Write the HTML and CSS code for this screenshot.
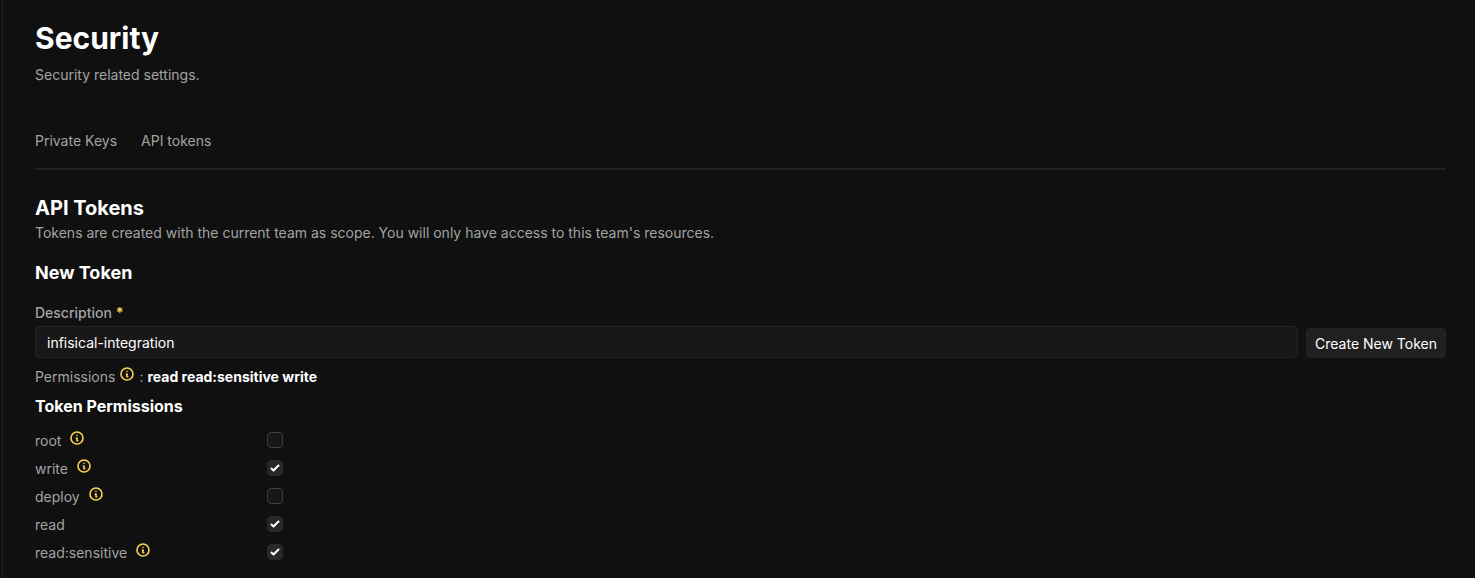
FILE: index.html
```
<!DOCTYPE html>
<html lang="en">
<head>
<meta charset="utf-8">
<title>Security</title>
<link rel="stylesheet" href="styles.css">
</head>
<body>
<svg class="sprite" aria-hidden="true">
  <symbol id="info" viewBox="0 0 24 24">
    <g fill="none" stroke="currentColor" stroke-width="2.4" stroke-linecap="round" stroke-linejoin="round">
      <circle cx="12" cy="12" r="9"/>
      <path d="M12 8h.01M11 12h1v4h1"/>
    </g>
  </symbol>
</svg>
<main class="page">
  <h1 class="title">Security</h1>
  <p class="subtitle">Security related settings.</p>
  <nav class="tabs">
    <a class="tab" href="#keys">Private Keys</a>
    <a class="tab" href="#tokens">API tokens</a>
  </nav>
  <section>
    <h2 class="heading">API Tokens</h2>
    <p class="lead">Tokens are created with the current team as scope. You will only have access to this team's resources.</p>
    <h3 class="subheading">New Token</h3>
    <form>
      <div class="create">
        <div class="field">
          <label class="label" for="description">Description <span class="required">*</span></label>
          <input class="input" id="description" type="text" value="infisical-integration" required>
        </div>
        <button class="button" type="submit">Create New Token</button>
      </div>
      <p class="summary">Permissions <svg class="icon"><use href="#info"/></svg> <span>:</span> <strong class="granted">read read:sensitive write</strong></p>
      <h4 class="minor">Token Permissions</h4>
      <div class="permissions">
        <div class="permission"><label class="name" for="root">root <svg class="icon"><use href="#info"/></svg></label><input class="check" id="root" type="checkbox"></div>
        <div class="permission"><label class="name" for="write">write <svg class="icon"><use href="#info"/></svg></label><input class="check" id="write" type="checkbox" checked></div>
        <div class="permission"><label class="name" for="deploy">deploy <svg class="icon"><use href="#info"/></svg></label><input class="check" id="deploy" type="checkbox"></div>
        <div class="permission"><label class="name" for="read">read</label><input class="check" id="read" type="checkbox" checked></div>
        <div class="permission"><label class="name" for="sensitive">read:sensitive <svg class="icon"><use href="#info"/></svg></label><input class="check" id="sensitive" type="checkbox" checked></div>
      </div>
    </form>
  </section>
</main>
</body>
</html>
```
FILE: styles.css
```
* { box-sizing: border-box; }
html { background: #101010; }
body {
  margin: 0 0 0 2px;
  background: #101010;
  color: #a3a3a3;
  font: 14px/20px Inter, "Liberation Sans", sans-serif;
}
h1, h2, h3, h4, p { margin: 0; }
h1, h2, h3, h4 { color: #fff; font-weight: 700; }
.sprite { display: none; }
.page {
  min-height: 100vh;
  padding: 20px 29px 0 32px;
  border-left: 1px solid #202020;
}
.title { font-size: 30px; line-height: 36px; }
.subtitle { padding-top: 9px; }
.tabs {
  display: flex;
  gap: 24px;
  margin-top: 46px;
  padding-bottom: 17px;
  border-bottom: 2px solid #202020;
}
.tab { color: inherit; text-decoration: none; }
.heading { margin-top: 24px; font-size: 20px; line-height: 28px; }
.lead { padding-top: 1px; }
.subheading { margin-top: 16px; font-size: 18px; line-height: 28px; }
.create {
  display: flex;
  align-items: flex-end;
  gap: 8px;
  margin-top: 16px;
}
.field { display: flex; flex: 1; flex-direction: column; gap: 3px; }
.label { font-weight: 500; }
.required { color: #fcd452; font-weight: 700; }
.input {
  width: 100%;
  height: 32px;
  padding: 0 11px;
  border: 1px solid #242424;
  border-radius: 4px;
  background: #181818;
  color: #fff;
  font: inherit;
}
.button {
  height: 30px;
  padding: 2px 8px 0;
  border: 1px solid #242424;
  border-radius: 4px;
  background: #202020;
  color: #fff;
  font: inherit;
}
.summary { display: flex; gap: 4px; padding-top: 9px; }
.icon { width: 16px; height: 16px; margin-top: -1px; color: #fcd452; }
.granted { color: #fff; font-weight: 700; }
.minor { margin-top: 7px; font-size: 16px; line-height: 24px; }
.permissions { padding-top: 8px; }
.permission {
  display: flex;
  align-items: center;
  justify-content: space-between;
  width: 248px;
  height: 28px;
}
.name { display: flex; gap: 8px; padding-top: 2px; }
.check {
  appearance: none;
  width: 16px;
  height: 16px;
  margin: 0;
  border: 1px solid #404040;
  border-radius: 4px;
  background: #181818;
}
.check:checked {
  border-color: #282828;
  background: #282828 url("data:image/svg+xml,%3Csvg viewBox='0 0 16 16' fill='white' xmlns='http://www.w3.org/2000/svg'%3E%3Cpath d='M12.207 4.793a1 1 0 010 1.414l-5 5a1 1 0 01-1.414 0l-2-2a1 1 0 011.414-1.414L6.5 9.086l4.293-4.293a1 1 0 011.414 0z'/%3E%3C/svg%3E") center / 16px 16px no-repeat;
}
```
